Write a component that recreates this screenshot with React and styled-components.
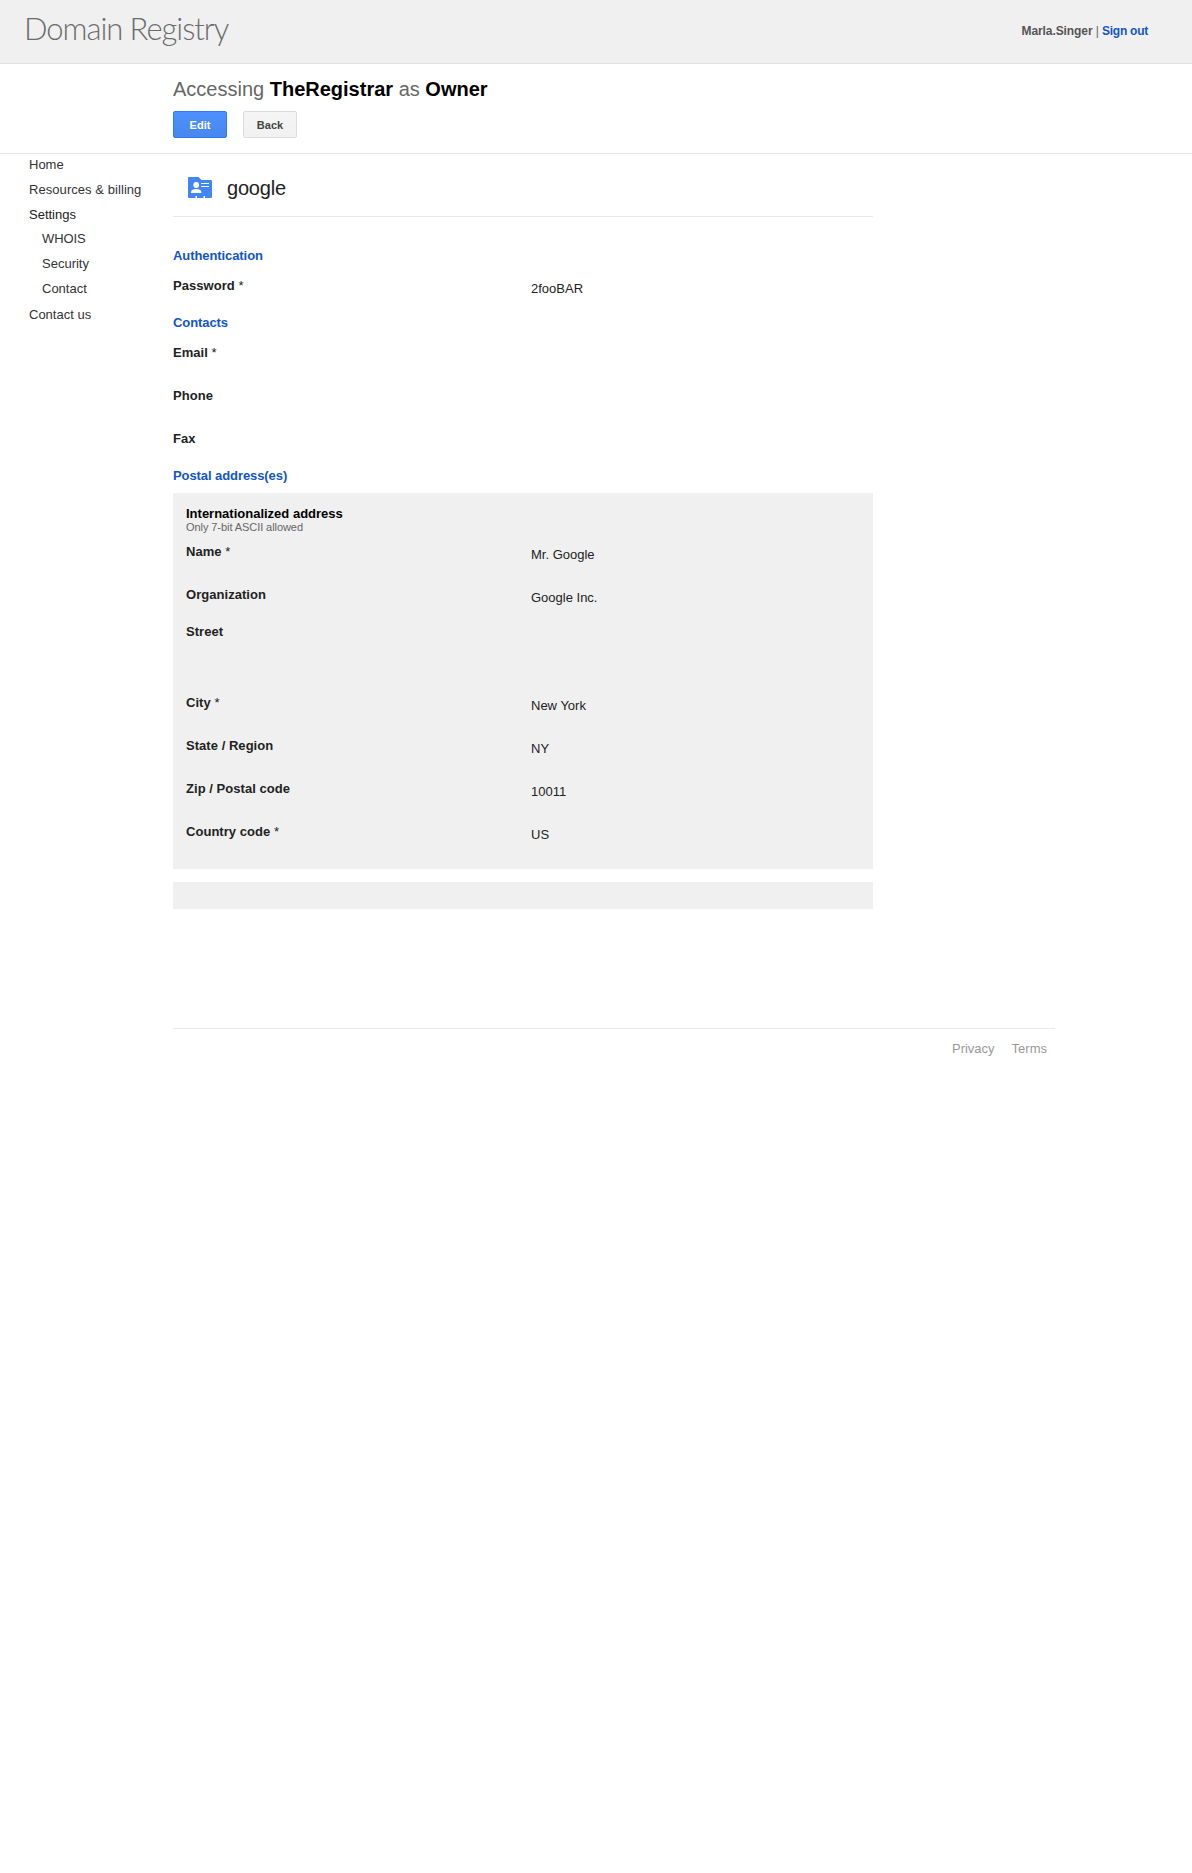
import React from "react";
import styled, { createGlobalStyle } from "styled-components";

const GlobalStyle = createGlobalStyle`
  body {
    margin: 0;
    background: #fff;
    color: #222;
    font: 13px/15px "Liberation Sans", Arial, sans-serif;
  }
`;

const Header = styled.header`
  display: flex;
  justify-content: space-between;
  align-items: flex-start;
  box-sizing: border-box;
  height: 64px;
  padding: 8px 44px 0 24px;
  background: #f0f0f0;
  border-bottom: 1px solid #e2e2e2;
`;

const Logo = styled.div`
  font: 300 31px/40px Lato, sans-serif;
  letter-spacing: -1.05px;
  color: #6c6c6c;
  white-space: nowrap;
`;

const Account = styled.div`
  padding-top: 16px;
  font-size: 12px;
  line-height: 14px;
  letter-spacing: -0.09px;
  color: #666;
`;

const User = styled.b`
  color: #555;
`;

const Link = styled.a`
  color: #15c;
  font-weight: bold;
  letter-spacing: -0.25px;
`;

const Toolbar = styled.section`
  box-sizing: border-box;
  height: 90px;
  padding: 14px 0 0 173px;
  border-bottom: 1px solid #e8e8e8;
`;

const Access = styled.h1`
  margin: 0 0 10px;
  font-size: 20px;
  line-height: 23px;
  font-weight: normal;
  color: #666;

  b {
    color: #000;
  }
`;

const Buttons = styled.div`
  display: flex;
  gap: 16px;
`;

const Button = styled.button`
  box-sizing: border-box;
  width: 54px;
  height: 27px;
  padding: 1px 0 0;
  border: 1px solid ${(p) => (p.$primary ? "#3079ed" : "#dcdcdc")};
  border-radius: 2px;
  background: ${(p) =>
    p.$primary
      ? "linear-gradient(#4d90fe, #4787ed)"
      : "linear-gradient(#f5f5f5, #f1f1f1)"};
  color: ${(p) => (p.$primary ? "#fff" : "#444")};
  font: bold 11px/24px "Liberation Sans", Arial, sans-serif;
`;

const Body = styled.div`
  display: grid;
  grid-template-columns: 173px 700px;
`;

const Nav = styled.nav`
  display: flex;
  flex-direction: column;
  padding: 3px 0 0 29px;
`;

const NavItem = styled.a`
  height: 25px;
  letter-spacing: ${(p) => p.$tracking || 0}px;
  color: ${(p) => (p.$current ? "#222" : "#333")};
`;

const SubNav = styled.div`
  display: flex;
  flex-direction: column;
  height: 75px;
  margin: -1px 0 1px;
  padding-left: 13px;
`;

const TitleBar = styled.div`
  display: flex;
  align-items: flex-start;
  gap: 15px;
  box-sizing: border-box;
  height: 63px;
  padding: 22px 0 0 15px;
  border-bottom: 1px solid #e8e8e8;
`;

const Title = styled.h2`
  margin: 1px 0 0;
  font-size: 20px;
  line-height: 23px;
  font-weight: normal;
  letter-spacing: -0.2px;
`;

const CardIcon = styled.svg`
  width: 24px;
  height: 21px;
  margin-top: 1px;
`;

const Form = styled.div`
  padding-top: 31px;
`;

const GroupTitle = styled.h3`
  margin: 0 0 ${(p) => p.$gap}px;
  font-size: 13px;
  line-height: 15px;
  letter-spacing: -0.08px;
  color: #15c;
`;

const Row = styled.div`
  display: grid;
  grid-template-columns: ${(p) => (p.$inset ? 345 : 358)}px 1fr;
  height: ${(p) => p.$height}px;
`;

const Label = styled.label`
  font-weight: bold;
  letter-spacing: 0.04px;
`;

const Required = styled.span`
  font-weight: normal;
`;

const Value = styled.span`
  padding-top: 3px;
`;

const Panel = styled.div`
  box-sizing: border-box;
  height: ${(p) => p.$height}px;
  margin-bottom: 13px;
  padding: 13px 13px 0;
  background: #f0f0f0;
`;

const PanelTitle = styled.div`
  font-weight: bold;
  color: #000;
`;

const Hint = styled.div`
  height: 23px;
  font-size: 11px;
  line-height: 12px;
  letter-spacing: -0.07px;
  color: #666;
`;

const Footer = styled.footer`
  display: flex;
  justify-content: flex-end;
  gap: 17px;
  box-sizing: border-box;
  width: 882px;
  margin: 106px 0 0 173px;
  padding: 12px 8px 0 0;
  border-top: 1px solid #e8e8e8;
  color: #999;
`;

const Field = ({ label, value, required, height = 43, inset }) => (
  <Row $height={height} $inset={inset}>
    <Label>
      {label}
      {required && <Required> *</Required>}
    </Label>
    <Value>{value}</Value>
  </Row>
);

const addressFields = [
  { label: "Name", value: "Mr. Google", required: true },
  { label: "Organization", value: "Google Inc.", height: 37 },
  { label: "Street", height: 71 },
  { label: "City", value: "New York", required: true },
  { label: "State / Region", value: "NY" },
  { label: "Zip / Postal code", value: "10011" },
  { label: "Country code", value: "US", required: true },
];

export default function App() {
  return (
    <>
      <GlobalStyle />
      <Header>
        <Logo>Domain Registry</Logo>
        <Account>
          <User>Marla.Singer</User> | <Link>Sign out</Link>
        </Account>
      </Header>
      <Toolbar>
        <Access>
          Accessing <b>TheRegistrar</b> as <b>Owner</b>
        </Access>
        <Buttons>
          <Button $primary>Edit</Button>
          <Button>Back</Button>
        </Buttons>
      </Toolbar>
      <Body>
        <Nav>
          <NavItem>Home</NavItem>
          <NavItem $tracking={0.06}>Resources &amp; billing</NavItem>
          <NavItem $current>Settings</NavItem>
          <SubNav>
            <NavItem $tracking={-0.1}>WHOIS</NavItem>
            <NavItem>Security</NavItem>
            <NavItem>Contact</NavItem>
          </SubNav>
          <NavItem>Contact us</NavItem>
        </Nav>
        <main>
          <TitleBar>
            <CardIcon viewBox="0 0 24 21">
              <path
                fill="#4285f4"
                d="M1 0h9.500l3 3H23a1 1 0 0 1 1 1v16a1 1 0 0 1-1 1h-6v-2h-1.500v2H9v-2H7.500v2H1a1 1 0 0 1-1-1V1a1 1 0 0 1 1-1z"
              />
              <circle cx="8.200" cy="8" r="2.900" fill="#fff" />
              <path fill="#fff" d="M3 16v-1c0-2 2.500-3 5.200-3s5.200 1 5.200 3v1zM13 6h8v1h-8zM13 9h8v1h-8z" />
            </CardIcon>
            <Title>google</Title>
          </TitleBar>
          <Form>
            <GroupTitle $gap={15}>Authentication</GroupTitle>
            <Field label="Password" value="2fooBAR" required height={37} />
            <GroupTitle $gap={15}>Contacts</GroupTitle>
            <Field label="Email" required />
            <Field label="Phone" />
            <Field label="Fax" height={37} />
            <GroupTitle $gap={10}>Postal address(es)</GroupTitle>
            <Panel $height={376}>
              <PanelTitle>Internationalized address</PanelTitle>
              <Hint>Only 7-bit ASCII allowed</Hint>
              {addressFields.map((field) => (
                <Field key={field.label} {...field} inset />
              ))}
            </Panel>
            <Panel $height={27} />
          </Form>
        </main>
      </Body>
      <Footer>
        <a>Privacy</a>
        <a>Terms</a>
      </Footer>
    </>
  );
}
